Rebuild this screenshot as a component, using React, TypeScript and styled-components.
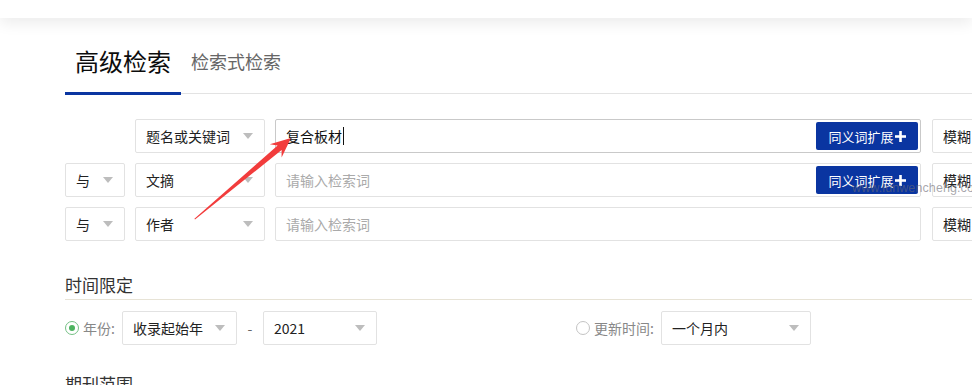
import React from 'react';
import styled, { createGlobalStyle } from 'styled-components';

const GlobalStyle = createGlobalStyle`
  *, *::before, *::after {
    box-sizing: border-box;
  }
  html, body {
    margin: 0;
    padding: 0;
    overflow: hidden;
    background: #fff;
    font-family: "Noto Sans CJK SC", "Noto Sans", sans-serif;
  }
`;

const Page = styled.div`
  position: relative;
  width: 972px;
  height: 385px;
  overflow: hidden;
`;

const Header = styled.div`
  height: 18px;
  background: #fff;
  box-shadow: 0 4px 16px rgba(0, 0, 0, 0.09);
  position: relative;
`;

const Main = styled.div`
  padding: 31px 0 0 65px;
`;

const TabBar = styled.div`
  display: flex;
  align-items: flex-end;
  border-bottom: 1px solid #e3e3e3;
`;

const Tab = styled.div<{ $active?: boolean }>`
  padding: 0 10px 19px;
  line-height: 24px;
  font-size: ${(p) => (p.$active ? '24px' : '18px')};
  color: ${(p) => (p.$active ? '#0c0c0c' : '#666')};
  border-bottom: 3px solid ${(p) => (p.$active ? '#0a35a1' : 'transparent')};
  margin-bottom: -2px;
  cursor: pointer;
`;

const SearchRows = styled.div`
  display: flex;
  flex-direction: column;
  gap: 10px;
  margin-top: 25px;
`;

const Row = styled.div`
  display: grid;
  grid-template-columns: 60px 130px 646px 120px;
  column-gap: 10px;
  height: 34px;
`;

const Select = styled.div<{ $width?: number }>`
  display: flex;
  align-items: center;
  justify-content: space-between;
  height: 34px;
  width: ${(p) => (p.$width ? `${p.$width}px` : 'auto')};
  padding: 0 11px 0 10px;
  border: 1px solid #e2e2e2;
  border-radius: 2px;
  background: #fff;
  font-size: 14px;
  color: #222;
  white-space: nowrap;
`;

const MatchSelect = styled(Select)`
  margin-left: 1px;
`;

const Caret = styled.span`
  width: 0;
  height: 0;
  border-left: 5px solid transparent;
  border-right: 5px solid transparent;
  border-top: 6px solid #bdbdbd;
  flex-shrink: 0;
`;

const Input = styled.div<{ $focused?: boolean }>`
  display: flex;
  align-items: center;
  height: 34px;
  padding: 0 2px 0 10px;
  border: 1px solid ${(p) => (p.$focused ? '#c9c9c9' : '#e2e2e2')};
  border-radius: 2px;
  font-size: 14px;
  color: #111;
`;

const Value = styled.span`
  display: flex;
  align-items: center;
`;

const TextCursor = styled.span`
  width: 1px;
  height: 18px;
  margin-left: 1px;
  background: #111;
`;

const Placeholder = styled.span`
  color: #aaa;
`;

const ExpandButton = styled.button`
  margin-left: auto;
  width: 102px;
  height: 28px;
  display: flex;
  align-items: center;
  justify-content: center;
  gap: 1px;
  border: 0;
  border-radius: 2px;
  background: #0a35a1;
  color: #fff;
  font-family: inherit;
  font-size: 13px;
  padding: 0;
  cursor: pointer;
`;

const Section = styled.section<{ $gap: number }>`
  margin-top: ${(p) => p.$gap}px;
`;

const SectionTitle = styled.div`
  font-size: 17px;
  line-height: 20px;
  color: #333;
  padding-bottom: 4px;
  border-bottom: 1px solid #e7e3d6;
`;

const TimeRow = styled.div`
  display: grid;
  grid-template-columns: 511px auto;
  height: 34px;
  margin-top: 11px;
`;

const Group = styled.div`
  display: flex;
  align-items: center;
`;

const Radio = styled.span<{ $checked?: boolean }>`
  width: 14px;
  height: 14px;
  border-radius: 50%;
  border: 1px solid ${(p) => (p.$checked ? '#74c084' : '#c4c4c4')};
  display: flex;
  align-items: center;
  justify-content: center;
  flex-shrink: 0;

  &::after {
    content: '';
    width: 6px;
    height: 6px;
    border-radius: 50%;
    background: #4cb35f;
    display: ${(p) => (p.$checked ? 'block' : 'none')};
  }
`;

const RadioLabel = styled.span`
  font-size: 14px;
  color: #888;
  margin: 0 7px 0 4px;
  white-space: nowrap;
`;

const Dash = styled.span`
  width: 26px;
  text-align: center;
  font-size: 14px;
  color: #666;
`;

const Watermark = styled.div`
  position: absolute;
  left: 852px;
  top: 181px;
  font-family: "Liberation Sans", Arial, sans-serif;
  font-size: 12.5px;
  letter-spacing: 0.1px;
  color: rgba(105, 105, 115, 0.6);
  pointer-events: none;
`;

const ArrowOverlay = styled.svg`
  position: absolute;
  left: 180px;
  top: 125px;
  pointer-events: none;
`;

const PlusIcon = () => (
  <svg width="11" height="11" viewBox="0 0 11 11">
    <rect x="4.2" y="0" width="2.6" height="11" fill="#fff" />
    <rect x="0" y="4.2" width="11" height="2.6" fill="#fff" />
  </svg>
);

const rows = [
  { logic: null, field: '题名或关键词', value: '复合板材', expand: true },
  { logic: '与', field: '文摘', value: '', expand: true },
  { logic: '与', field: '作者', value: '', expand: false },
];

const App: React.FC = () => {
  return (
    <Page>
      <GlobalStyle />
      <Header />
      <Main>
        <TabBar>
          <Tab $active>高级检索</Tab>
          <Tab>检索式检索</Tab>
        </TabBar>

        <SearchRows>
          {rows.map((row, i) => (
            <Row key={i}>
              {row.logic ? (
                <Select>
                  {row.logic}
                  <Caret />
                </Select>
              ) : (
                <span />
              )}
              <Select>
                {row.field}
                <Caret />
              </Select>
              <Input $focused={i === 0}>
                {row.value ? (
                  <Value>
                    {row.value}
                    <TextCursor />
                  </Value>
                ) : (
                  <Placeholder>请输入检索词</Placeholder>
                )}
                {row.expand && (
                  <ExpandButton>
                    同义词扩展
                    <PlusIcon />
                  </ExpandButton>
                )}
              </Input>
              <MatchSelect>
                模糊
                <Caret />
              </MatchSelect>
            </Row>
          ))}
        </SearchRows>

        <Section $gap={34}>
          <SectionTitle>时间限定</SectionTitle>
          <TimeRow>
            <Group>
              <Radio $checked />
              <RadioLabel>年份:</RadioLabel>
              <Select $width={115}>
                收录起始年
                <Caret />
              </Select>
              <Dash>-</Dash>
              <Select $width={114}>
                2021
                <Caret />
              </Select>
            </Group>
            <Group>
              <Radio />
              <RadioLabel>更新时间:</RadioLabel>
              <Select $width={150}>
                一个月内
                <Caret />
              </Select>
            </Group>
          </TimeRow>
        </Section>

        <Section $gap={29}>
          <SectionTitle>期刊范围</SectionTitle>
        </Section>
      </Main>

      <Watermark>www.lunwencheng.com</Watermark>

      <ArrowOverlay width="120" height="105" viewBox="180 125 120 105">
        <polygon
          points="195,219.5 281.6,150 281.6,157.6 291,138 269.8,144.2 277.6,145.4 194.4,218.8"
          fill="#f23c3c"
        />
      </ArrowOverlay>
    </Page>
  );
};

export default App;
